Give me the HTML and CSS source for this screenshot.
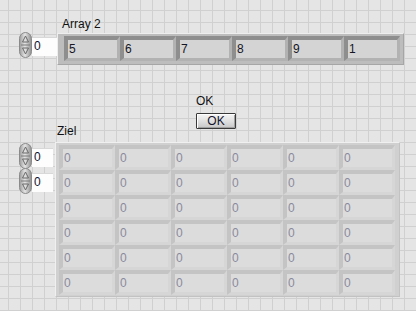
FILE: index.html
```html
<!DOCTYPE html>
<html lang="de">
  <head>
    <meta charset="UTF-8" />
    <title>Frontpanel</title>
    <link rel="stylesheet" href="styles.css">
  </head>
  <body>
    <div class="panel">
      <div class="ctl arr2">
        <div class="lbl lbl-arr2">Array 2</div>
        <div class="arow">
          <div class="idx idx-wide">
            <svg class="spin" width="13" height="26" viewBox="0 0 13 26">
              <defs>
                <linearGradient id="sg" x1="0" x2="1" y1="0" y2="0">
                  <stop offset="0" stop-color="#9a9a9a" />
                  <stop offset="0.45" stop-color="#e4e4e4" />
                  <stop offset="1" stop-color="#8e8e8e" />
                </linearGradient>
              </defs>
              <rect x="0.5" y="0.5" width="12" height="25" rx="6" fill="url(#sg)" stroke="#8a8a8a" />
              <path d="M6.5 4 L9.5 10 L3.5 10 Z" fill="none" stroke="#6a6a6a" />
              <line x1="2" y1="13" x2="11" y2="13" stroke="#7a7a7a" />
              <path d="M3.5 16 L9.5 16 L6.5 22 Z" fill="none" stroke="#6a6a6a" />
            </svg>
            <div class="num">0</div>
          </div>
          <div class="frame frame-ind">
            <div class="cell">5</div>
            <div class="cell">6</div>
            <div class="cell">7</div>
            <div class="cell">8</div>
            <div class="cell">9</div>
            <div class="cell">1</div>
          </div>
        </div>
      </div>

      <div class="ctl okbox">
        <div class="lbl">OK</div>
        <button class="btn">OK</button>
      </div>

      <div class="ctl ziel">
        <div class="lbl lbl-ziel">Ziel</div>
        <div class="arow">
          <div class="idxcol">
            <div class="idx">
              <svg class="spin" width="13" height="26" viewBox="0 0 13 26">
                <rect x="0.5" y="0.5" width="12" height="25" rx="6" fill="url(#sg)" stroke="#8a8a8a" />
                <path d="M6.5 4 L9.5 10 L3.5 10 Z" fill="none" stroke="#6a6a6a" />
                <line x1="2" y1="13" x2="11" y2="13" stroke="#7a7a7a" />
                <path d="M3.5 16 L9.5 16 L6.5 22 Z" fill="none" stroke="#6a6a6a" />
              </svg>
              <div class="num">0</div>
            </div>
            <div class="idx">
              <svg class="spin" width="13" height="26" viewBox="0 0 13 26">
                <rect x="0.5" y="0.5" width="12" height="25" rx="6" fill="url(#sg)" stroke="#8a8a8a" />
                <path d="M6.5 4 L9.5 10 L3.5 10 Z" fill="none" stroke="#6a6a6a" />
                <line x1="2" y1="13" x2="11" y2="13" stroke="#7a7a7a" />
                <path d="M3.5 16 L9.5 16 L6.5 22 Z" fill="none" stroke="#6a6a6a" />
              </svg>
              <div class="num">0</div>
            </div>
          </div>
          <div class="frame frame-ctl">
            <div class="cell off">0</div><div class="cell off">0</div><div class="cell off">0</div>
            <div class="cell off">0</div><div class="cell off">0</div><div class="cell off">0</div>
            <div class="cell off">0</div><div class="cell off">0</div><div class="cell off">0</div>
            <div class="cell off">0</div><div class="cell off">0</div><div class="cell off">0</div>
            <div class="cell off">0</div><div class="cell off">0</div><div class="cell off">0</div>
            <div class="cell off">0</div><div class="cell off">0</div><div class="cell off">0</div>
            <div class="cell off">0</div><div class="cell off">0</div><div class="cell off">0</div>
            <div class="cell off">0</div><div class="cell off">0</div><div class="cell off">0</div>
            <div class="cell off">0</div><div class="cell off">0</div><div class="cell off">0</div>
            <div class="cell off">0</div><div class="cell off">0</div><div class="cell off">0</div>
            <div class="cell off">0</div><div class="cell off">0</div><div class="cell off">0</div>
            <div class="cell off">0</div><div class="cell off">0</div><div class="cell off">0</div>
          </div>
        </div>
      </div>
    </div>
  </body>
</html>
```

FILE: styles.css
```css
* {
  margin: 0px;
  box-sizing: border-box;
  font-family: "Liberation Sans", Arial, sans-serif;
}

body {
  width: 416px;
  height: 311px;
  overflow: hidden;
}

/* the front panel with its 12px grid */
.panel {
  position: relative;
  width: 416px;
  height: 311px;
  background-color: #e5e5e5;
  background-image:
    linear-gradient(to right, #d0d0d0 1px, transparent 1px),
    linear-gradient(to bottom, #d0d0d0 1px, transparent 1px);
  background-size: 12px 12px;
  background-position: 8px 10px;
}

/* controls sit where they were dropped on the panel */
.ctl {
  position: absolute;
}

.arr2 {
  left: 19px;
  top: 17px;
}

.okbox {
  left: 196px;
  top: 94px;
}

.ziel {
  left: 19px;
  top: 124px;
}

.lbl {
  font-size: 12px;
  line-height: 14px;
  color: #111;
  white-space: nowrap;
}

.lbl-arr2 {
  margin-left: 43px;
}

.lbl-ziel {
  margin-left: 38px;
}

.arow {
  display: flex;
  align-items: flex-start;
}

.arr2 .arow {
  margin-top: 1px;
}

.ziel .arow {
  margin-top: 4px;
}

/* index display: spinner + number */
.idx {
  display: flex;
  align-items: flex-start;
  height: 25px;
}

.spin {
  display: block;
  flex: none;
}

.num {
  margin-top: 5px;
  width: 21px;
  height: 19px;
  background: #fdfdfd;
  border-top: 1px solid #d8d8d8;
  padding-left: 2px;
  font-size: 12px;
  line-height: 17px;
  color: #141430;
}

.idx-wide .num {
  width: 25px;
}

.idxcol {
  display: flex;
  flex-direction: column;
  margin-top: 1px;
}

/* array frames */
.frame {
  display: grid;
  grid-template-columns: repeat(6, 56px);
  grid-auto-rows: 25px;
  border: 1px solid;
}

.frame-ind {
  margin-top: 1px;
  padding: 2px 3px 3px 6px;
  background: #bdbdbd;
  border-color: #eeeeee #a6a6a6 #a6a6a6 #eeeeee;
}

.frame-ctl {
  margin-left: 2px;
  padding: 2px 4px 1px 3px;
  background: #d0d0d0;
  border-color: #f0f0f0 #c2c2c2 #c2c2c2 #f0f0f0;
}

.cell {
  border-style: solid;
  border-width: 4px 3px 3px 4px;
  border-color: #8e8e8e #b2b2b2 #b2b2b2 #8e8e8e;
  background: #d4d4d4;
  padding-left: 1px;
  font-size: 12px;
  line-height: 18px;
  color: #161626;
}

.cell.off {
  border-color: #c4c4c4 #d6d6d6 #d6d6d6 #c4c4c4;
  background: #dcdcdc;
  color: #8a8a9c;
}

/* boolean button */
.btn {
  display: block;
  margin-top: 5px;
  width: 40px;
  height: 16px;
  padding: 0;
  border: 1px solid #3a3a3a;
  border-radius: 1px;
  background: linear-gradient(#f6f6f6, #dedede 55%, #c6c6c6);
  box-shadow: inset 1px 1px 0 #ffffff, inset -1px -1px 0 #a0a0a0;
  font-size: 12px;
  line-height: 13px;
  color: #14142e;
}
```
